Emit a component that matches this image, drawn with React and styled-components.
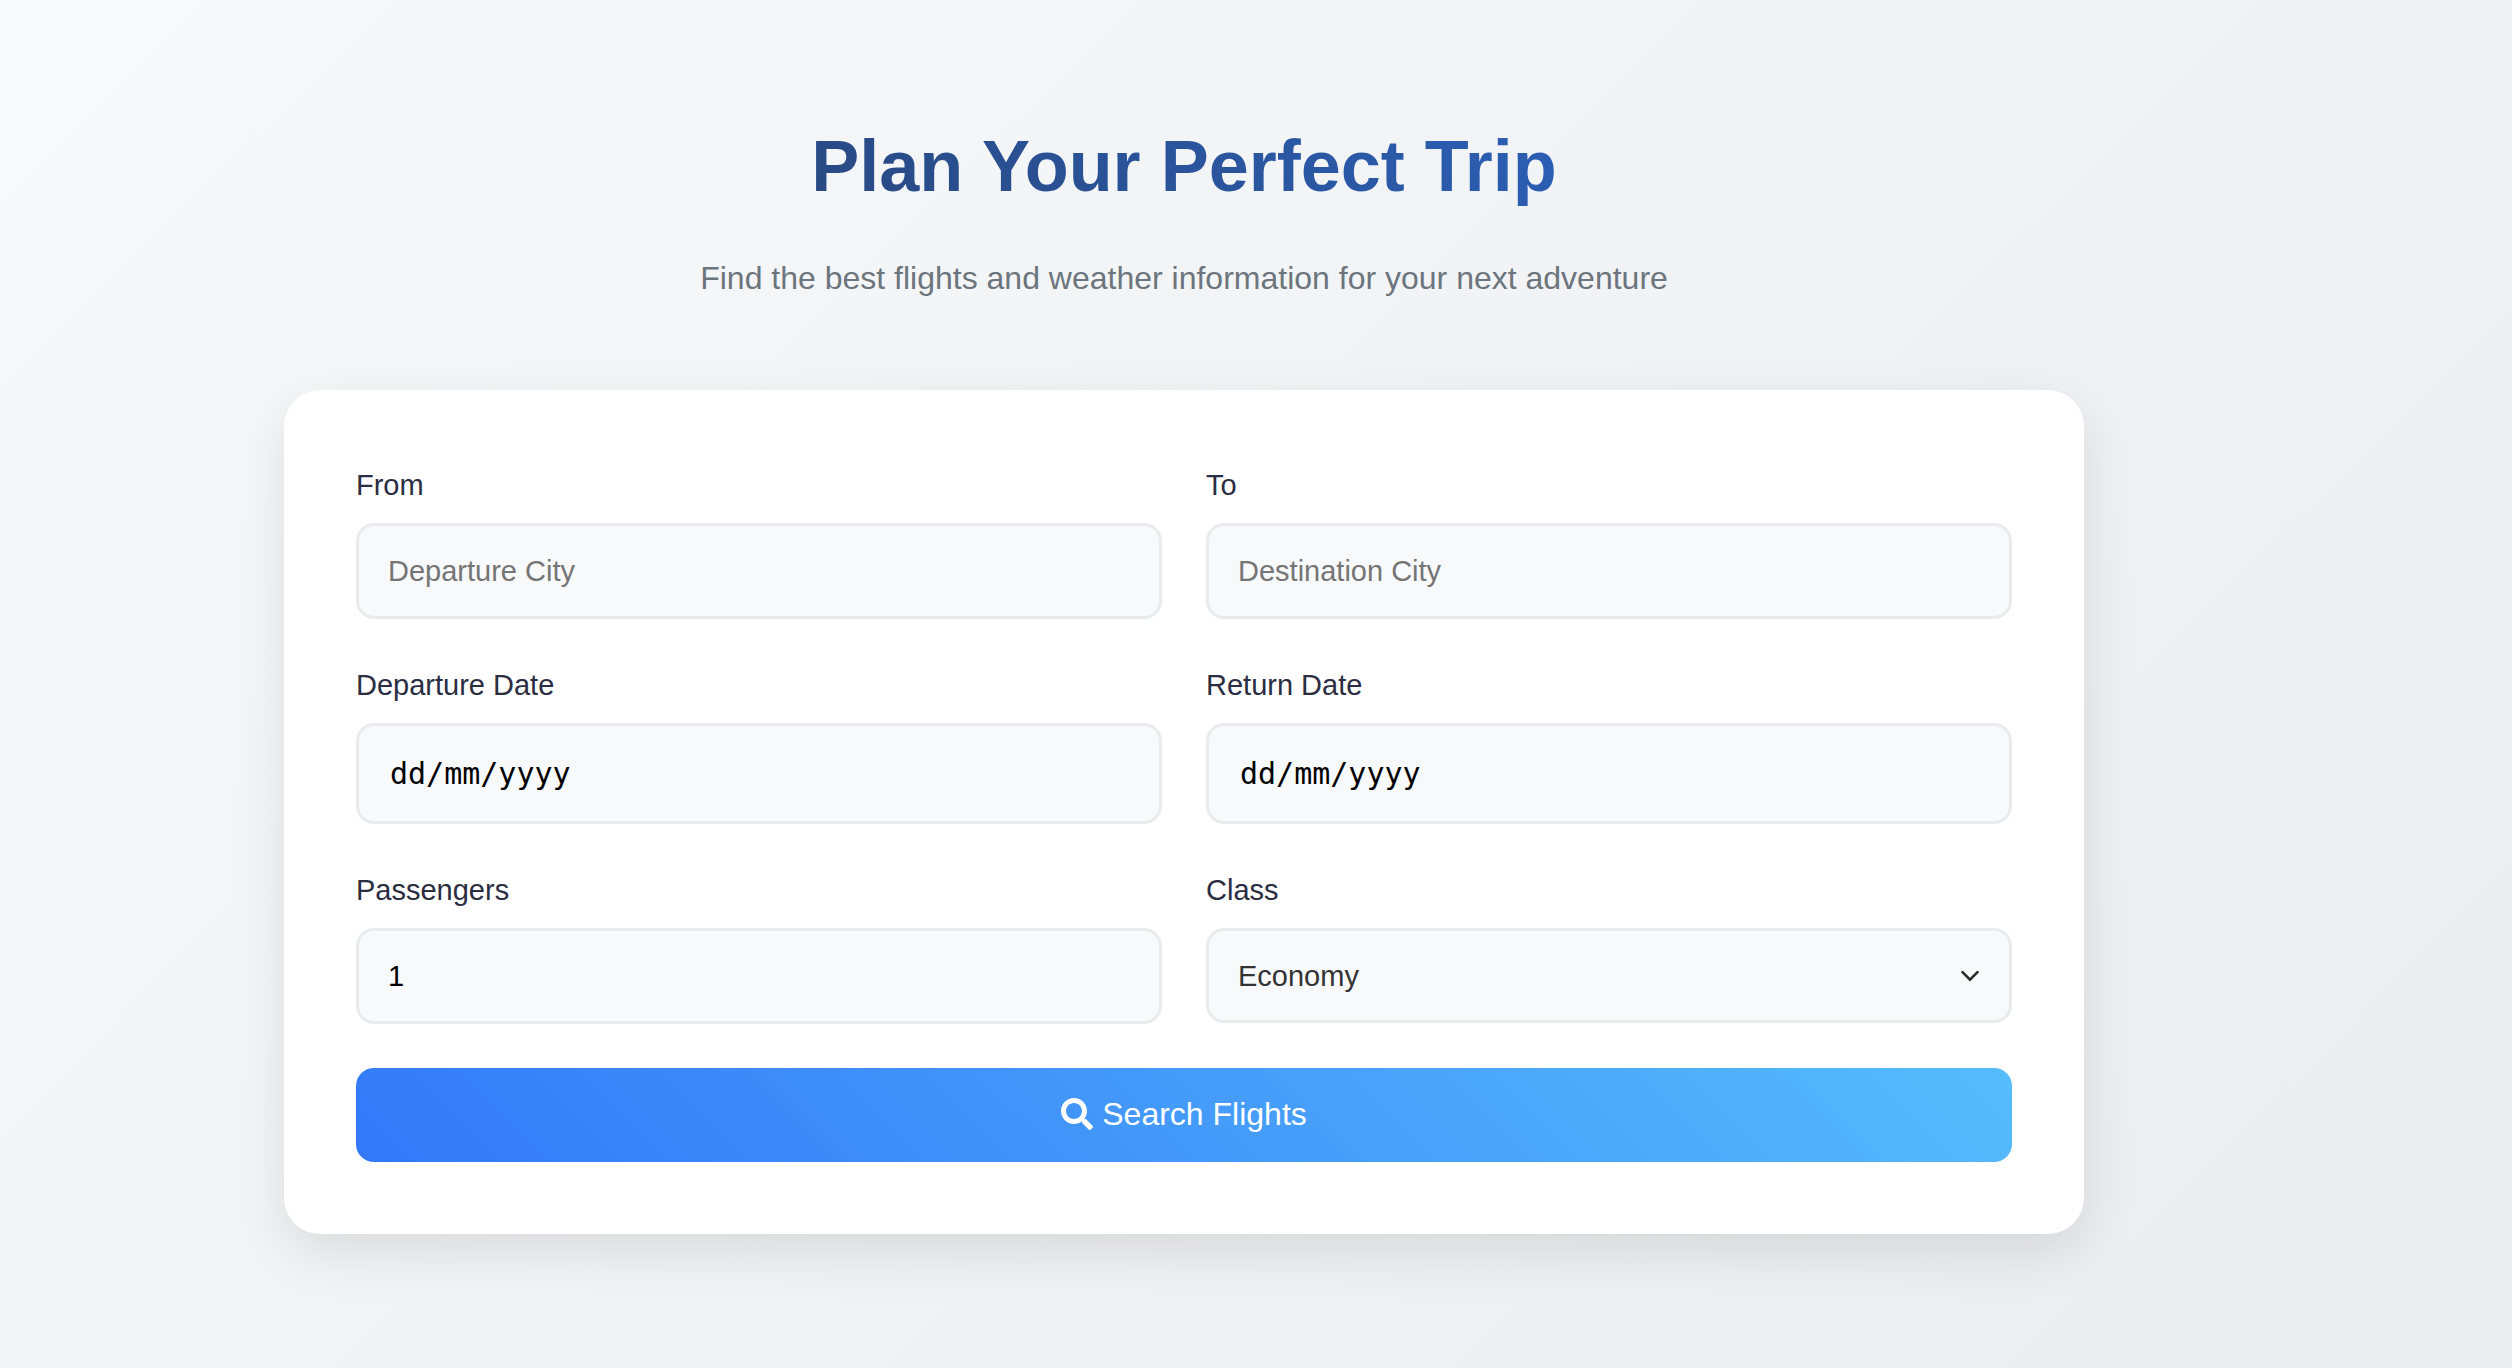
import React, { useState } from 'react';
import styled, { createGlobalStyle } from 'styled-components';
import { FaSearch } from 'react-icons/fa';

const GlobalStyle = createGlobalStyle`
  *, *::before, *::after {
    box-sizing: border-box;
  }

  body {
    margin: 0;
    font-family: "Liberation Sans", Arial, sans-serif;
    font-size: 29px;
    line-height: 46px;
    color: #2b2d42;
  }
`;

const Page = styled.main`
  min-height: 100vh;
  padding: 108px 144px 108px 0;
  background: linear-gradient(135deg, #f8f9fa 0%, #ebecf0 100%);
`;

const Container = styled.div`
  max-width: 1800px;
  margin: 0 auto;
`;

const Header = styled.header`
  margin-bottom: 86px;
  text-align: center;
`;

const Title = styled.h1`
  margin: 0 0 29px;
  font-size: 72px;
  line-height: 116px;
  font-weight: 700;
  color: transparent;
  background: linear-gradient(45deg, #273c61 0%, #2d6cd6 100%);
  background-clip: text;
`;

const Subtitle = styled.p`
  margin: 0;
  font-size: 32px;
  line-height: 51px;
  color: #6c757d;
`;

const Card = styled.form`
  padding: 72px;
  border-radius: 36px;
  background: #ffffff;
  box-shadow: 0 18px 54px rgba(0, 0, 0, 0.1);
`;

const Fields = styled.div`
  display: grid;
  grid-template-columns: 1fr 1fr;
  align-items: start;
  gap: 43px 44px;
  margin-bottom: 44px;
`;

const Field = styled.div`
  display: flex;
  flex-direction: column;
  gap: 15px;
`;

const Label = styled.label`
  line-height: 46px;
`;

const Input = styled.input`
  width: 100%;
  height: 96px;
  padding: 0 29px;
  border: 3px solid #e9ebee;
  border-radius: 18px;
  background: #f8f9fb;
  color: #000000;
  font-family: inherit;
  font-size: 29px;
  line-height: 32px;
  appearance: textfield;

  &::placeholder {
    color: #757575;
    opacity: 1;
  }

  &::-webkit-inner-spin-button {
    display: none;
  }
`;

const DateInput = styled(Input)`
  height: 101px;
  padding: 0 31px;
  font-family: "DejaVu Sans Mono", monospace;
  font-size: 30px;

  &::placeholder {
    color: #000000;
  }
`;

const SelectBox = styled.div`
  display: grid;
  align-items: center;

  > * {
    grid-area: 1 / 1;
  }
`;

const Select = styled.select`
  width: 100%;
  height: 95px;
  padding: 0 29px;
  border: 3px solid #e9ebee;
  border-radius: 18px;
  background: #f8f9fb;
  color: #333333;
  font-family: inherit;
  font-size: 29px;
  appearance: none;
`;

const Chevron = styled.svg`
  justify-self: end;
  width: 20px;
  height: 12px;
  margin-right: 32px;
  pointer-events: none;
`;

const SearchButton = styled.button`
  display: flex;
  justify-content: center;
  align-items: center;
  gap: 9px;
  width: 100%;
  padding: 28px 29px 30px;
  border: 0;
  border-radius: 18px;
  background: linear-gradient(45deg, #3278f8 0%, #56bcfb 100%);
  color: #ffffff;
  font-family: inherit;
  font-size: 32px;
  line-height: 36px;
  cursor: pointer;
`;

function TextField({ id, label, control: Control = Input, ...rest }) {
  return (
    <Field>
      <Label htmlFor={id}>{label}</Label>
      <Control id={id} name={id} {...rest} />
    </Field>
  );
}

export default function App() {
  const [passengers, setPassengers] = useState('1');
  const [travelClass, setTravelClass] = useState('economy');

  return (
    <>
      <GlobalStyle />
      <Page>
        <Container>
          <Header>
            <Title>Plan Your Perfect Trip</Title>
            <Subtitle>Find the best flights and weather information for your next adventure</Subtitle>
          </Header>
          <Card onSubmit={(event) => event.preventDefault()}>
            <Fields>
              <TextField id="from" label="From" placeholder="Departure City" />
              <TextField id="to" label="To" placeholder="Destination City" />
              <TextField id="departure" label="Departure Date" control={DateInput} placeholder="dd/mm/yyyy" inputMode="numeric" />
              <TextField id="return" label="Return Date" control={DateInput} placeholder="dd/mm/yyyy" inputMode="numeric" />
              <TextField
                id="passengers"
                label="Passengers"
                type="number"
                min="1"
                value={passengers}
                onChange={(event) => setPassengers(event.target.value)}
              />
              <Field>
                <Label htmlFor="class">Class</Label>
                <SelectBox>
                  <Select id="class" value={travelClass} onChange={(event) => setTravelClass(event.target.value)}>
                    <option value="economy">Economy</option>
                    <option value="business">Business</option>
                    <option value="first">First Class</option>
                  </Select>
                  <Chevron viewBox="0 0 20 12" fill="none" aria-hidden="true">
                    <path d="M2.5 2.2 L10 9.7 L17.5 2.2" stroke="#2b2b2b" strokeWidth="2.6" strokeLinecap="round" />
                  </Chevron>
                </SelectBox>
              </Field>
            </Fields>
            <SearchButton type="submit">
              <FaSearch aria-hidden="true" />
              Search Flights
            </SearchButton>
          </Card>
        </Container>
      </Page>
    </>
  );
}
